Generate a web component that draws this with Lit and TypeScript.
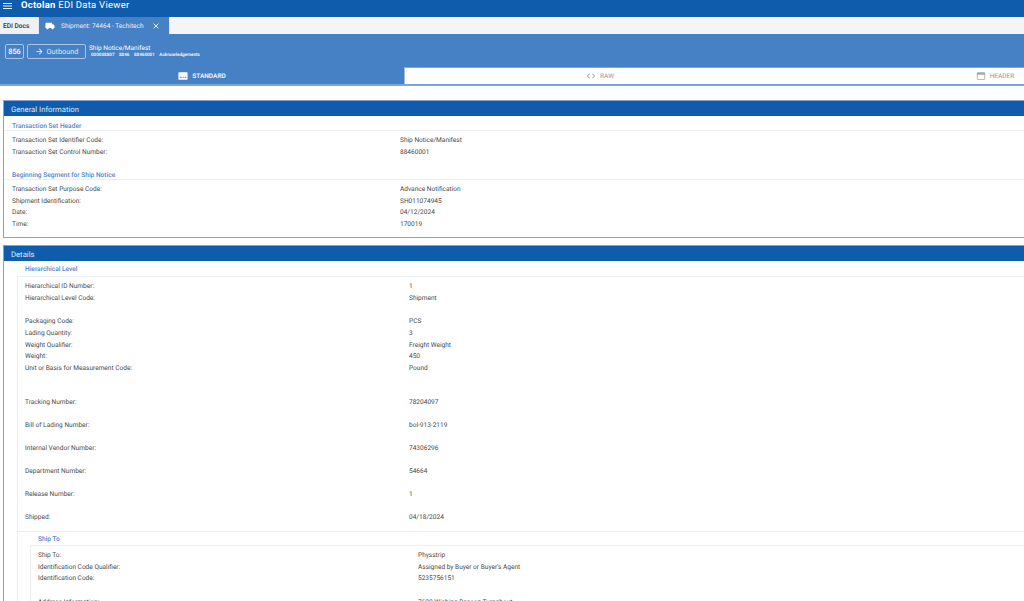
import { LitElement, html, css, svg } from "lit";
import { customElement } from "lit/decorators.js";

type Row = [string, string] | null;

const menu = svg`<svg class="ic-menu" viewBox="0 0 9 6"><path d="M0 .5h9M0 3h9M0 5.5h9" stroke="#fff" stroke-width=".9" fill="none"/></svg>`;
const truck = svg`<svg class="ic-truck" viewBox="0 0 24 24"><path fill="#fff" d="M20 8h-3V4H3c-1.1 0-2 .9-2 2v11h2c0 1.66 1.34 3 3 3s3-1.34 3-3h6c0 1.66 1.34 3 3 3s3-1.34 3-3h2v-5l-3-4z"/></svg>`;
const close = svg`<svg class="ic-close" viewBox="0 0 10 10"><path d="M2 2l6 6M8 2l-6 6" stroke="#fff" stroke-width="1.1" fill="none"/></svg>`;
const arrow = svg`<svg class="ic-arrow" viewBox="0 0 24 24"><path fill="#fff" d="M12 4l-1.41 1.41L16.17 11H4v2h12.17l-5.58 5.59L12 20l8-8z"/></svg>`;
const standard = svg`<svg class="ic-tab" viewBox="0 0 24 24"><path fill="#fff" fill-rule="evenodd" d="M3 3h18a2 2 0 012 2v14a2 2 0 01-2 2H3a2 2 0 01-2-2V5a2 2 0 012-2zM4 14v2h5v-2zm7 0v2h3v-2zm5 0v2h4v-2z"/></svg>`;
const code = svg`<svg class="ic-tab" viewBox="0 0 24 24"><path fill="#a8a8a8" d="M9.4 16.6L4.8 12l4.6-4.6L8 6l-6 6 6 6 1.4-1.4zm5.2 0l4.6-4.6-4.6-4.6L16 6l6 6-6 6-1.4-1.4z"/></svg>`;
const header = svg`<svg class="ic-tab" viewBox="0 0 24 24"><path fill="#a8a8a8" d="M20 3H4c-1.1 0-2 .9-2 2v14c0 1.1.9 2 2 2h16c1.1 0 2-.9 2-2V5c0-1.1-.9-2-2-2zm0 16H4V9h16v10z"/></svg>`;

const topA: Row[] = [
  ["Transaction Set Identifier Code:", "Ship Notice/Manifest"],
  ["Transaction Set Control Number:", "88460001"],
];
const topB: Row[] = [
  ["Transaction Set Purpose Code:", "Advance Notification"],
  ["Shipment Identification:", "SH011074945"],
  ["Date:", "04/12/2024"],
  ["Time:", "170019"],
];
const hierA: Row[] = [
  ["Hierarchical ID Number:", "1"],
  ["Hierarchical Level Code:", "Shipment"],
  null,
  ["Packaging Code:", "PCS"],
  ["Lading Quantity:", "3"],
  ["Weight Qualifier:", "Freight Weight"],
  ["Weight:", "450"],
  ["Unit or Basis for Measurement Code:", "Pound"],
  null,
];
const spaced: Row[] = [
  ["Tracking Number:", "78204097"],
  ["Bill of Lading Number:", "bol-913-2119"],
  ["Internal Vendor Number:", "74306296"],
  ["Department Number:", "54664"],
  ["Release Number:", "1"],
  ["Shipped:", "04/18/2024"],
];
const shipTo: Row[] = [
  ["Ship To:", "Physstrip"],
  ["Identification Code Qualifier:", "Assigned by Buyer or Buyer's Agent"],
  ["Identification Code:", "5235756151"],
  null,
  ["Address Information:", "7600 Wishing Beacon Turnabout"],
];

@customElement("app-root")
export class AppRoot extends LitElement {
  static styles = css`
    :host {
      display: block;
      width: 1024px;
      height: 601px;
      overflow: hidden;
      background: #fff;
      font-family: Roboto, "Liberation Sans", sans-serif;
      color: #4a4a4a;
      font-size: 6.55px;
      text-rendering: geometricPrecision;
    }
    svg { display: block; flex: none; }
    .toolbar {
      height: 17px;
      background: #0f5cad;
      color: #fff;
      display: flex;
      align-items: center;
      padding: 0 0 6px 3px;
      gap: 9px;
      font-size: 9.5px;
      letter-spacing: 0.25px;
      box-sizing: border-box;
    }
    .toolbar b { font-weight: 700; }
    .ic-menu { width: 9px; height: 6px; }
    .tabs {
      height: 17px;
      display: flex;
      background: #f5f5f5;
    }
    .tab-docs {
      width: 38px;
      display: flex;
      align-items: center;
      padding-left: 3px;
      box-sizing: border-box;
      font-size: 6.6px;
      color: #333;
      background: #f0f0f0;
      font-weight: 500;
    }
    .tab-ship {
      width: 132px;
      background: #4581c4;
      color: #e8f0fa;
      display: flex;
      align-items: center;
      padding-left: 6px;
      box-sizing: border-box;
      font-size: 6.55px;
      white-space: nowrap;
      border-left: 1px solid #dfe8f4;
      border-right: 1px solid #dfe8f4;
    }
    .ic-truck { width: 10px; height: 10px; margin-right: 6px; }
    .ic-close { width: 8px; height: 8px; margin-left: 8.5px; }
    .band {
      background: #4581c4;
      color: #fff;
      height: 33px;
      display: flex;
      align-items: center;
      padding: 1px 5px 0;
      gap: 3px;
      box-sizing: border-box;
    }
    .code {
      width: 19px;
      height: 15px;
      border: 1px solid #a9c6e8;
      border-radius: 2px;
      display: flex;
      align-items: center;
      justify-content: center;
      font-size: 7.4px;
      font-weight: 500;
      box-sizing: border-box;
    }
    .dir {
      width: 59px;
      height: 15px;
      border: 1px solid #a9c6e8;
      border-radius: 2px;
      display: flex;
      align-items: center;
      justify-content: center;
      font-size: 7.3px;
      gap: 3px;
      box-sizing: border-box;
      color: #dce9f7;
    }
    .ic-arrow { width: 9px; height: 9px; }
    .meta .t { font-size: 6.5px; line-height: 9px; }
    .meta .s { display: flex; gap: 4.5px; font-size: 4.6px; line-height: 6px; padding-left: 2px; font-weight: 500; }
    .subtabs {
      display: flex;
      height: 19px;
      overflow: hidden;
      font-size: 6.5px;
      font-weight: 500;
      color: #ababab;
      background: #fff;
      border-bottom: 2px solid #7aa5d8;
      box-sizing: border-box;
    }
    .st {
      flex: none;
      display: flex;
      align-items: center;
      justify-content: center;
      gap: 4px;
      box-sizing: border-box;
    }
    .st-std {
      width: 405px;
      background: #4581c4;
      color: #e8f0fa;
      font-weight: 700;
      border-right: 1px solid #9dbde3;
    }
    .st-raw { width: 390px; border-top: 1px solid #7aa5d8; }
    .st-head { width: 400px; border-top: 1px solid #7aa5d8; }
    .ic-tab { width: 10px; height: 10px; }
    .content { padding: 14px 0 0 3px; }
    .card {
      width: 1040px;
      border: 1px solid #7fa5d8;
      border-right: none;
      margin-bottom: 7px;
      box-sizing: border-box;
    }
    .card-h {
      height: 15px;
      background: #0f5cad;
      color: #dfe9f6;
      font-size: 7.7px;
      display: flex;
      align-items: center;
      padding: 1px 0 0 7px;
      box-sizing: border-box;
    }
    .sec {
      color: #4f86cf;
      font-weight: 500;
      font-size: 6.6px;
      height: 15px;
      display: flex;
      align-items: center;
      padding: 6.5px 0 0 8px;
      border-bottom: 1px solid #eceff2;
      box-sizing: border-box;
    }
    .rows { padding-top: 4px; }
    .row {
      display: grid;
      height: 11.7px;
      line-height: 11.7px;
      white-space: nowrap;
    }
    .l0 .row { grid-template-columns: 388px 1fr; padding-left: 8px; }
    .gap0 { height: 6.6px; }
    .pad0 { height: 6.5px; }
    .gap1 { height: 5px; }
    .wide .row { height: 23px; line-height: 23px; }
    .nest1 { margin-left: 13px; border-left: 1px solid #eceff2; border-top: 1px solid #eceff2; }
    .nest1 .row { grid-template-columns: 384px 1fr; padding-left: 7px; }
    .nest2 { margin-left: 12px; }
    .nest2b { border-left: 1px solid #eceff2; border-top: 1px solid #eceff2; padding-top: 4px; }
    .nest1 .nest2b .row { grid-template-columns: 380px 1fr; padding-left: 7px; }
    .head-plain {
      color: #4f86cf;
      font-weight: 500;
      font-size: 6.6px;
      height: 15px;
      padding-top: 2px;
      line-height: 13px;
      box-sizing: border-box;
    }
    .indent1 { padding-left: 21px; }
    .sec2 { padding-left: 8px; height: 13px; line-height: 11px; }
    .divider { border-top: 1px solid #eceff2; margin-top: 1.5px; }
  `;

  private rows(list: Row[]) {
    return list.map((r) =>
      r
        ? html`<div class="row"><span>${r[0]}</span><span>${r[1]}</span></div>`
        : html`<div class="row"></div>`
    );
  }

  render() {
    return html`
      <div class="toolbar">${menu}<span><b>Octolan</b> EDI Data Viewer</span></div>
      <div class="tabs">
        <div class="tab-docs">EDI Docs</div>
        <div class="tab-ship">${truck}<span>Shipment: 74464 - Techitech</span>${close}</div>
      </div>
      <div class="band">
        <div class="code">856</div>
        <div class="dir">${arrow}<span>Outbound</span></div>
        <div class="meta">
          <div class="t">Ship Notice/Manifest</div>
          <div class="s"><span>000008807</span><span>8846</span><span>88460001</span><span>Acknowledgements</span></div>
        </div>
      </div>
      <div class="subtabs">
        <div class="st st-std">${standard}<span>STANDARD</span></div>
        <div class="st st-raw">${code}<span>RAW</span></div>
        <div class="st st-head">${header}<span>HEADER</span></div>
      </div>
      <div class="content">
        <section class="card l0">
          <div class="card-h">General Information</div>
          <div class="sec">Transaction Set Header</div>
          <div class="rows">${this.rows(topA)}</div>
          <div class="gap0"></div>
          <div class="sec">Beginning Segment for Ship Notice</div>
          <div class="rows">${this.rows(topB)}</div>
          <div class="pad0"></div>
        </section>
        <section class="card">
          <div class="card-h">Details</div>
          <div class="head-plain indent1">Hierarchical Level</div>
          <div class="nest1">
            <div class="rows">${this.rows(hierA)}</div>
            <div class="gap1"></div>
            <div class="wide">${this.rows(spaced)}</div>
            <div class="divider"></div>
            <div class="nest2">
              <div class="head-plain sec2">Ship To</div>
              <div class="nest2b">${this.rows(shipTo)}</div>
            </div>
          </div>
        </section>
      </div>
    `;
  }
}
